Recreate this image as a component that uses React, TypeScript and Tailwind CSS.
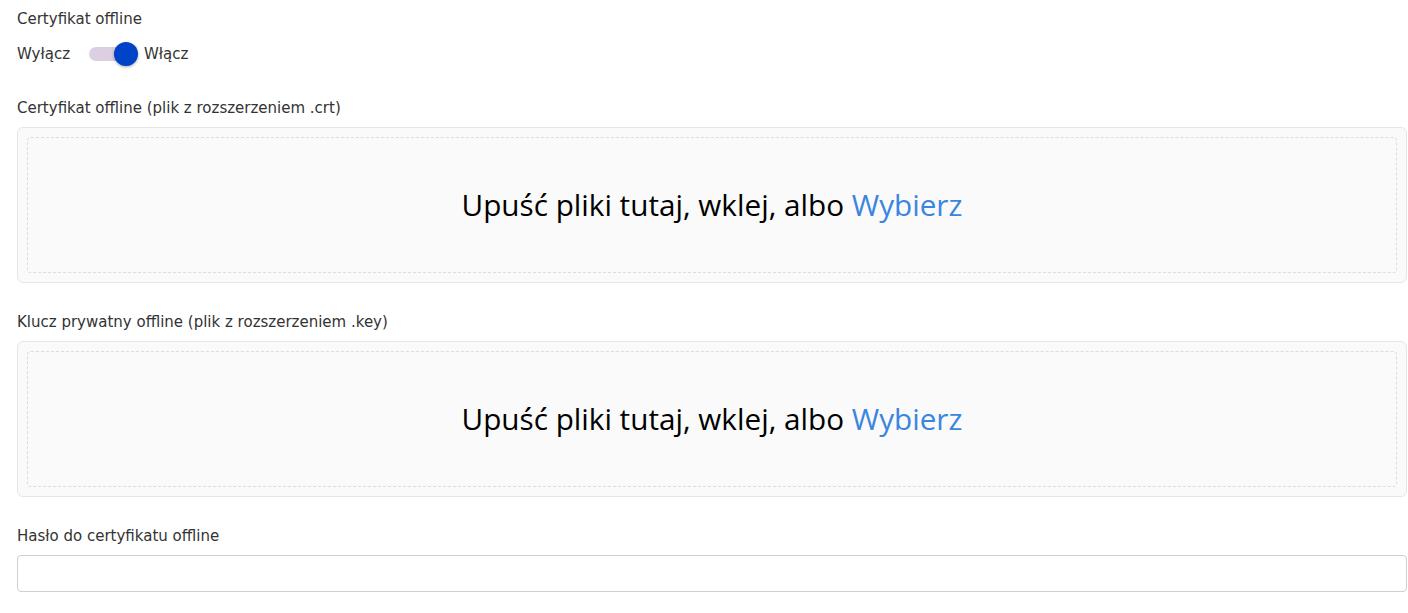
import React, { useState } from 'react';

const labelFont = { fontFamily: '"DejaVu Sans", Inter, sans-serif' };

const DropZone: React.FC = () => (
  <div className="h-[156px] rounded-md border border-[#e6e6e6] bg-[#fafafa] p-[9px]">
    <div className="flex h-full items-center justify-center rounded-sm border border-dashed border-[#dcdcdc]">
      <span
        className="text-[29.7px] leading-none text-black"
        style={{ fontFamily: '"Open Sans", "Noto Sans", sans-serif' }}
      >
        Upuść pliki tutaj, wklej, albo <span className="cursor-pointer text-[#3a86df]">Wybierz</span>
      </span>
    </div>
  </div>
);

export default function App() {
  const [on, setOn] = useState(true);

  return (
    <div className="min-h-screen bg-white pl-[17px] pr-[1px] pt-[9px] text-[#333]" style={labelFont}>
      {/* Toggle */}
      <div className="text-[15px] leading-5">Certyfikat offline</div>
      <div className="mt-[13px] flex h-6 items-center text-[15px]">
        <span className="w-[54px]">Wyłącz</span>
        <button
          type="button"
          onClick={() => setOn(!on)}
          className="relative ml-[18px] h-[14px] w-[44px] rounded-full bg-[#dccfe2]"
        >
          <span
            className={`absolute top-1/2 h-6 w-6 -translate-y-1/2 rounded-full bg-[#0043c6] shadow-[0_1px_3px_rgba(0,0,0,0.35)] ${on ? 'left-[25px]' : 'left-[-4px]'}`}
          />
        </button>
        <span className="ml-[11px]">Włącz</span>
      </div>

      {/* Certificate file */}
      <div className="mt-[32px] text-[15px] leading-5">Certyfikat offline (plik z rozszerzeniem .crt)</div>
      <div className="mt-[9px]">
        <DropZone />
      </div>

      {/* Key file */}
      <div className="mt-[29px] text-[15px] leading-5">Klucz prywatny offline (plik z rozszerzeniem .key)</div>
      <div className="mt-[9px]">
        <DropZone />
      </div>

      {/* Password */}
      <div className="mt-[29px] text-[15px] leading-5">Hasło do certyfikatu offline</div>
      <input
        type="password"
        className="mt-[9px] block h-[37px] w-full rounded border border-[#cfcfcf] bg-white px-3 text-[14px] outline-none"
      />
    </div>
  );
}
